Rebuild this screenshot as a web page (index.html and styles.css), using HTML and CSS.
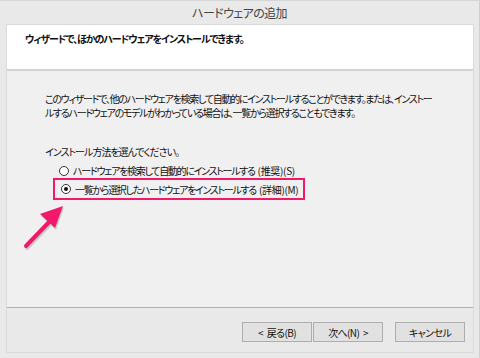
FILE: index.html
```html
<!doctype html>
<html>
	<head>
		<meta charset="utf-8">
		<title>ハードウェアの追加</title>
		<link rel="stylesheet" href="styles.css">
	</head>
	<body>
		<div class="window">
			<div class="title">ハードウェアの追加</div>
			<div class="frame">
				<div class="head">
					<b>ウィザードで、ほかのハードウェアをインストールできます。</b>
				</div>
				<div class="panel">
					<p class="intro">
						このウィザードで、他のハードウェアを検索して自動的にインストールすることができます。または、インストー<br>
						ルするハードウェアのモデルがわかっている場合は、一覧から選択することもできます。
					</p>
					<p class="ask">インストール方法を選んでください。</p>
					<div class="choice">
						<span class="radio"></span>
						<span>ハードウェアを検索して自動的にインストールする <span class="lat">(推奨)(S)</span></span>
					</div>
					<div class="choice picked">
						<span class="radio on"></span>
						<span>一覧から選択したハードウェアをインストールする <span class="lat">(詳細)(M)</span></span>
					</div>
					<svg class="arrow" width="50" height="50" viewBox="0 0 50 50">
						<path d="M6 45 L31 19" stroke="#c8c8c8" stroke-width="4" stroke-linecap="round" transform="translate(1,2)"/>
						<path d="M43 5 L20 13 L35 27 Z" fill="#c8c8c8" transform="translate(1,2)"/>
						<path d="M6 45 L31 19" stroke="#f2186a" stroke-width="4" stroke-linecap="round"/>
						<path d="M43 5 L20 13 L35 27 Z" fill="#f2186a"/>
					</svg>
				</div>
				<div class="foot">
					<button class="btn">&lt; 戻る(B)</button>
					<button class="btn">次へ(N) &gt;</button>
					<button class="btn cancel">キャンセル</button>
				</div>
			</div>
		</div>
	</body>
</html>
```

FILE: styles.css
```css
body {
	margin: 0;
	font-family: "Noto Sans CJK JP", "Noto Sans", sans-serif;
	font-size: 10px;
	color: #111;
	background: #e9e9e9;
}

.window {
	width: 479px;
	height: 357px;
	border-top: 1px solid #d6d6d6;
	border-right: 1px solid #d0d0d0;
	display: flex;
	flex-direction: column;
}

.title {
	height: 23px;
	line-height: 23px;
	text-align: center;
	font-size: 12px;
	color: #444;
	font-feature-settings: "palt";
	letter-spacing: -0.6px;
}

.frame {
	margin: 0 5px 0 6px;
	height: 327px;
	border: 1px solid #dadada;
	display: flex;
	flex-direction: column;
}

.head {
	height: 46px;
	background: white;
	border-bottom: 2px solid #d4d4d4;
	padding: 6px 0 0 18px;
	box-sizing: border-box;
	font-feature-settings: "palt";
	letter-spacing: -1.1px;
}

.panel {
	flex: 1;
	position: relative;
	background: #f0f0f0;
	padding: 21px 0 0 38px;
	border-bottom: 1px solid #b0b0b0;
	font-feature-settings: "palt";
	letter-spacing: -1px;
}

p {
	margin: 0;
	line-height: 14px;
}

.intro {
	letter-spacing: -1.3px;
}

.ask {
	margin-top: 25px;
}

.choice {
	display: flex;
	align-items: center;
	gap: 4px;
	height: 19px;
	margin: 2px 0 0 14px;
	word-spacing: 2px;
	letter-spacing: -1.3px;
}

.choice .lat {
	letter-spacing: -0.3px;
}

.choice.picked {
	margin: -2px 0 0 8px;
	padding-left: 6px;
	width: 242px;
	height: 18px;
	border: 2px solid #f2186a;
}

.radio {
	width: 8px;
	height: 8px;
	border: 1px solid #333;
	border-radius: 50%;
	background: white;
	display: flex;
	align-items: center;
	justify-content: center;
}

.radio.on::after {
	content: "";
	width: 4px;
	height: 4px;
	border-radius: 50%;
	background: #111;
}

.arrow {
	position: absolute;
	left: 13px;
	top: 130px;
}

.foot {
	height: 44px;
	display: flex;
	align-items: flex-start;
	padding: 14px 0 0 235px;
	box-sizing: border-box;
}

.btn {
	width: 70px;
	height: 20px;
	margin-right: 1px;
	padding: 0;
	background: #e1e1e1;
	border: 1px solid #adadad;
	font-family: inherit;
	font-size: 10px;
	color: #111;
	font-feature-settings: "palt";
	letter-spacing: -0.6px;
	word-spacing: 2px;
}

.btn.cancel {
	margin-left: 11px;
}
```
